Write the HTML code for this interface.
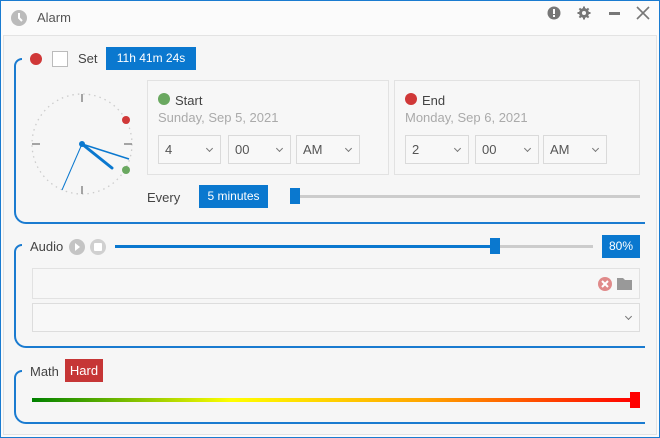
<!DOCTYPE html>
<html><head><meta charset="utf-8"><style>
*{box-sizing:border-box;margin:0;padding:0}
body{width:660px;height:438px;overflow:hidden;font-family:"Segoe UI","Liberation Sans",sans-serif;font-size:12px;color:#444;background:#fbfbfb;position:relative}
.a{position:absolute}
.frame{left:0;top:0;width:660px;height:438px;border:1px solid #1a7bd0;pointer-events:none}
.panel{left:3px;top:35px;width:654px;height:400px;background:#f6f6f6;border:1px solid #e3e3e3}
.br{border:2px solid #1a7bd0;border-right:none;border-top:none;border-radius:0 0 0 12px}
.brt{border-left:2px solid #1a7bd0;border-top:2px solid #1a7bd0;border-radius:10px 0 0 0;width:8px;height:10px}
.badge{background:#0a78cf;color:#fff;text-align:center;line-height:23px;font-size:12px}
.box{border:1px solid #e2e2e2;background:#f7f7f7}
.sel{border:1px solid #dadada;background:#f8f8f8;height:29px;line-height:27px;padding-left:6px;color:#555;font-size:13px}
.chev{position:absolute;right:8px;top:10px;width:5px;height:5px;border-right:1px solid #777;border-bottom:1px solid #777;transform:rotate(45deg)}
.dot{border-radius:50%;width:12px;height:12px}
</style></head><body>
<svg class="a" style="left:9px;top:8px" width="20" height="20"><circle cx="10" cy="10" r="8" fill="#bbb"/><path d="M10 5v5l3 3" stroke="#fff" stroke-width="2" fill="none"/></svg>
<div class="a" style="left:37px;top:10px;font-size:13px;color:#555">Alarm</div>
<svg class="a" style="left:546px;top:5px" width="16" height="16"><circle cx="8" cy="8" r="6.5" fill="#777"/><rect x="7" y="4" width="2" height="5" fill="#fff"/><rect x="7" y="10" width="2" height="2" fill="#fff"/></svg>
<svg class="a" style="left:576px;top:5px" width="16" height="16"><g fill="#777"><circle cx="8" cy="8" r="5"/><rect x="7" y="1.5" width="2" height="13"/><rect x="1.5" y="7" width="13" height="2"/><rect x="7" y="1.5" width="2" height="13" transform="rotate(45 8 8)"/><rect x="7" y="1.5" width="2" height="13" transform="rotate(-45 8 8)"/></g><circle cx="8" cy="8" r="2" fill="#fbfbfb"/></svg>
<div class="a" style="left:609px;top:12px;width:11px;height:3px;background:#777"></div>
<svg class="a" style="left:636px;top:6px" width="14" height="14"><path d="M1 1L13 13M13 1L1 13" stroke="#777" stroke-width="1.6"/></svg>
<div class="a panel"></div>
<div class="a brt" style="left:14px;top:58px"></div>
<div class="a br" style="left:14px;top:66px;width:631px;height:158px"></div>
<div class="a dot" style="left:30px;top:53px;background:#d03838"></div>
<div class="a" style="left:52px;top:51px;width:16px;height:16px;border:1px solid #bbb;background:#fff"></div>
<div class="a" style="left:78px;top:51px;font-size:13px">Set</div>
<div class="a badge" style="left:106px;top:47px;width:90px">11h 41m 24s</div>
<svg class="a" style="left:27px;top:89px" width="110" height="110">
<circle cx="55" cy="55" r="50" fill="none" stroke="#ccc" stroke-width="1.3" stroke-dasharray="1.5 4"/>
<g stroke="#888" stroke-width="1.5"><path d="M55 5v8M55 97v8M5 55h8M97 55h8"/></g>
<path d="M55 55L85 79" stroke="#0a78cf" stroke-width="3" stroke-linecap="round"/>
<path d="M55 55L102 70" stroke="#0a78cf" stroke-width="1.6"/>
<path d="M55 55L35 101" stroke="#0a78cf" stroke-width="1"/>
<circle cx="55" cy="55" r="3" fill="#0a78cf"/>
<circle cx="99" cy="31" r="4" fill="#d03838"/><circle cx="99" cy="81" r="4" fill="#6aa860"/>
</svg>
<div class="a box" style="left:147px;top:80px;width:242px;height:95px"></div>
<div class="a dot" style="left:158px;top:93px;background:#6aa860"></div>
<div class="a" style="left:175px;top:93px;font-size:13px">Start</div>
<div class="a" style="left:158px;top:110px;font-size:13px;color:#aaa">Sunday, Sep 5, 2021</div>
<div class="a sel" style="left:158px;top:135px;width:63px">4<i class="chev"></i></div>
<div class="a sel" style="left:228px;top:135px;width:63px">00<i class="chev"></i></div>
<div class="a sel" style="left:296px;top:135px;width:64px">AM<i class="chev"></i></div>
<div class="a box" style="left:394px;top:80px;width:246px;height:95px"></div>
<div class="a dot" style="left:405px;top:93px;background:#d03838"></div>
<div class="a" style="left:422px;top:93px;font-size:13px">End</div>
<div class="a" style="left:405px;top:110px;font-size:13px;color:#aaa">Monday, Sep 6, 2021</div>
<div class="a sel" style="left:405px;top:135px;width:64px">2<i class="chev"></i></div>
<div class="a sel" style="left:475px;top:135px;width:64px">00<i class="chev"></i></div>
<div class="a sel" style="left:543px;top:135px;width:64px">AM<i class="chev"></i></div>
<div class="a" style="left:147px;top:190px;font-size:13px">Every</div>
<div class="a badge" style="left:199px;top:185px;width:69px">5 minutes</div>
<div class="a" style="left:295px;top:195px;width:345px;height:3px;background:#ccc"></div>
<div class="a" style="left:290px;top:188px;width:10px;height:16px;background:#0a78cf"></div>
<div class="a brt" style="left:14px;top:244px"></div>
<div class="a br" style="left:14px;top:252px;width:631px;height:96px"></div>
<div class="a" style="left:30px;top:239px;font-size:13px">Audio</div>
<svg class="a" style="left:68px;top:238px" width="40" height="18"><circle cx="9" cy="9" r="8" fill="#c4c4c4"/><path d="M7 5l5 4-5 4z" fill="#fff"/><circle cx="30" cy="9" r="8" fill="#d0d0d0"/><rect x="26" y="5" width="8" height="8" fill="#fff" rx="1"/></svg>
<div class="a" style="left:115px;top:245px;width:380px;height:3px;background:#0a78cf"></div>
<div class="a" style="left:495px;top:245px;width:98px;height:3px;background:#ccc"></div>
<div class="a" style="left:490px;top:238px;width:10px;height:16px;background:#0a78cf"></div>
<div class="a badge" style="left:602px;top:235px;width:38px">80%</div>
<div class="a box" style="left:32px;top:268px;width:608px;height:31px"></div>
<svg class="a" style="left:596px;top:275px" width="40" height="18"><circle cx="9" cy="9" r="7" fill="#e08a8a"/><path d="M6 6l6 6M12 6l-6 6" stroke="#fff" stroke-width="2"/><path d="M21 3h6l2 2h7v10h-15z" fill="#999"/></svg>
<div class="a sel" style="left:32px;top:303px;width:608px;height:29px;border-color:#ddd"><i class="chev"></i></div>
<div class="a brt" style="left:14px;top:370px"></div>
<div class="a br" style="left:14px;top:378px;width:631px;height:46px"></div>
<div class="a" style="left:30px;top:364px;font-size:13px">Math</div>
<div class="a badge" style="left:65px;top:359px;width:38px;background:#c63636;font-size:13px">Hard</div>
<div class="a" style="left:32px;top:398px;width:603px;height:4px;background:linear-gradient(90deg,#008000,#ffff00 33%,#ffa500 65%,#ff0000)"></div>
<div class="a" style="left:630px;top:392px;width:10px;height:16px;background:#f00"></div>
<div class="a frame"></div>
</body></html>
